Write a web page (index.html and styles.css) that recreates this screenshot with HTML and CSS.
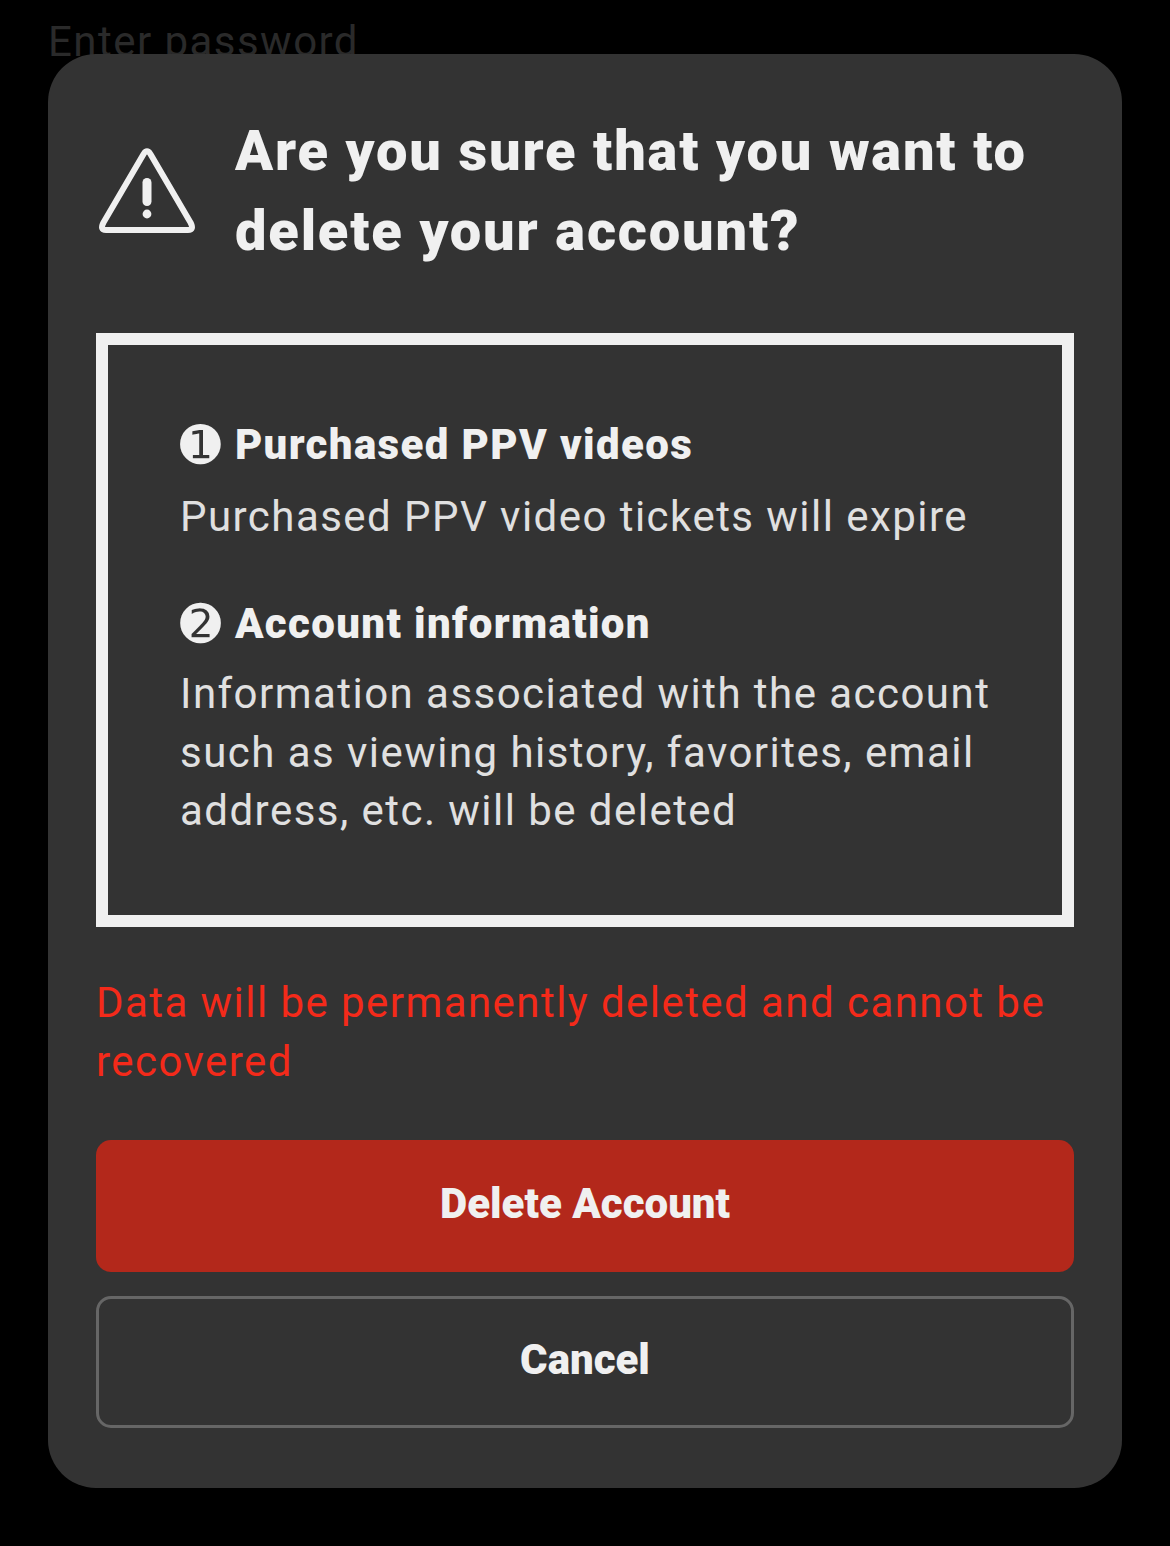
FILE: index.html
```html
<!DOCTYPE html>
<html lang="en">
<head>
<meta charset="utf-8">
<title>Delete account</title>
<link rel="stylesheet" href="styles.css">
</head>
<body>
<div class="backdrop-text">Enter password</div>
<div class="overlay">
  <section class="modal">
    <header class="head">
      <svg class="warn" viewBox="0 0 96 96" fill="none" stroke="#f0f0f0" stroke-linecap="round" stroke-linejoin="round">
        <path d="M47.6 11 Q51 5.5 54.4 11 L94.5 79.5 Q98.5 87 92 87 L10 87 Q3.5 87 7.5 79.5 Z" stroke-width="6"/>
        <path d="M51 39.5 V58.5" stroke-width="9"/>
        <circle cx="51" cy="71" r="4.4" fill="#f0f0f0" stroke="none"/>
      </svg>
      <h1 class="title">Are you sure that you want to delete your account?</h1>
    </header>
    <div class="box">
      <h2 class="item-title"><span class="num">➊</span> Purchased PPV videos</h2>
      <p class="item-text first">Purchased PPV video tickets will expire</p>
      <h2 class="item-title second"><span class="num">➋</span> Account information</h2>
      <p class="item-text next">Information associated with the account such as viewing history, favorites, email address, etc. will be deleted</p>
    </div>
    <p class="warning">Data will be permanently deleted and cannot be recovered</p>
    <button class="btn danger">Delete Account</button>
    <button class="btn cancel">Cancel</button>
  </section>
</div>
</body>
</html>
```
FILE: styles.css
```css
* { box-sizing: border-box; }
html, body { margin: 0; height: 100%; background: #000; overflow: hidden; }
body { font-family: Roboto, "Liberation Sans", sans-serif; color: #f0f0f0; }
.backdrop-text { padding: 13px 48px 0; font-size: 42px; line-height: 58px; letter-spacing: 1.46px; color: #2a2a2a; }
.overlay { position: fixed; inset: 0; padding: 54px 48px 0; }
.modal { background: #333; border-radius: 48px; padding: 57px 48px 60px; height: 1434px; display: flex; flex-direction: column; }
.head { display: flex; align-items: center; gap: 43px; }
.warn { width: 96px; height: 96px; flex: none; overflow: visible; }
.title { margin: 0; font-size: 56px; line-height: 80px; font-weight: 900; letter-spacing: 1.82px; }
.box { margin-top: 62px; height: 594px; border: 12px solid #f0f0f0; padding: 71px 48px 0 72px; }
.item-title { margin: 0; font-size: 42px; line-height: 58px; font-weight: 900; letter-spacing: 1.37px; }
.item-title.second { margin-top: 48px; }
.num { font-family: "DejaVu Sans", sans-serif; font-size: 49px; line-height: 0; letter-spacing: 0; vertical-align: -3px; margin-right: 2px; }
.item-text { margin: 0; font-size: 42px; line-height: 58.8px; letter-spacing: 1.46px; color: #e0e0e0; }
.item-text.first { margin-top: 14px; }
.item-text.next { margin-top: 12px; }
.warning { margin: 47px 0 0; font-size: 42px; line-height: 58.8px; letter-spacing: 1.44px; color: #f42a1a; }
.btn { display: block; width: 100%; height: 132px; border-radius: 15px; font-family: inherit; font-size: 42px; font-weight: 900; color: #f0f0f0; padding: 0 0 4px; }
.danger { margin-top: 48px; background: #b3281b; border: 0; }
.cancel { margin-top: 24px; background: transparent; border: 3px solid #666; }
```
